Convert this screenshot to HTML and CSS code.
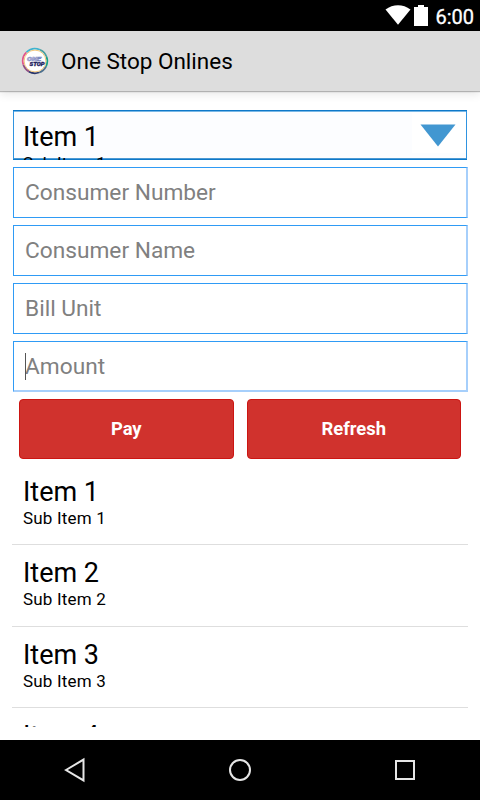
FILE: index.html
```html
<!DOCTYPE html>
<html lang="en">
<head>
<meta charset="UTF-8">
<meta name="viewport" content="width=device-width, initial-scale=1.0">
<title>One Stop Onlines</title>
<link rel="stylesheet" href="styles.css">
</head>
<body>
<div class="status-bar">
  <svg class="wifi" width="26" height="20" viewBox="0 0 26 20"><path d="M0.5 4.6C8-1.2 18-1.2 25.5 4.6L13 19.8z" fill="#fff"/></svg>
  <svg class="battery" width="14" height="21" viewBox="0 0 14 21"><path d="M0 2h4V0h6v2h4v19H0z" fill="#fff"/></svg>
  <span class="clock">6:00</span>
</div>
<header class="app-bar">
  <svg class="logo" width="28" height="28" viewBox="0 0 28 28">
    <circle cx="14" cy="14" r="12.2" fill="#fff"/>
    <g fill="none" stroke-width="1.8">
      <path d="M5.4 5.4A12.2 12.2 0 0 1 19 2.8" stroke="#3fb3cf"/>
      <path d="M19 2.8A12.2 12.2 0 0 1 25.6 10" stroke="#4a9fa0"/>
      <path d="M25.6 10A12.2 12.2 0 0 1 25 19.5" stroke="#16a085"/>
      <path d="M25 19.5A12.2 12.2 0 0 1 18 25.5" stroke="#4d6f8c"/>
      <path d="M18 25.5A12.2 12.2 0 0 1 8 24.6" stroke="#29366b"/>
      <path d="M8 24.6A12.2 12.2 0 0 1 2.3 17.5" stroke="#8d4f83"/>
      <path d="M2.3 17.5A12.2 12.2 0 0 1 5.4 5.4" stroke="#e0568b"/>
    </g>
    <circle cx="14" cy="14" r="10.9" fill="none" stroke="#f2c679" stroke-width="1"/>
    <text x="6" y="13.6" class="logo-one" textLength="14" lengthAdjust="spacingAndGlyphs">ONE</text>
    <text x="8.5" y="18.8" class="logo-stop" textLength="15" lengthAdjust="spacingAndGlyphs">STOP</text>
  </svg>
  <h1>One Stop Onlines</h1>
</header>
<main>
  <form class="bill-form">
    <div class="spinner">
      <div class="spinner-item">
        <div class="item-title">Item 1</div>
        <div class="item-sub">Sub Item 1</div>
      </div>
      <div class="spinner-arrow"><svg width="36" height="23" viewBox="0 0 36 23"><path d="M0.5 0.5h35L18 22.5z" fill="#4297d1"/></svg></div>
    </div>
    <input type="text" placeholder="Consumer Number" aria-label="Consumer Number">
    <input type="text" placeholder="Consumer Name" aria-label="Consumer Name">
    <input type="text" placeholder="Bill Unit" aria-label="Bill Unit">
    <div class="field-focused">
      <input type="text" placeholder="Amount" aria-label="Amount">
      <span class="caret"></span>
    </div>
    <div class="buttons">
      <button type="button">Pay</button>
      <button type="button">Refresh</button>
    </div>
  </form>
  <ul class="item-list">
    <li><div class="item-title">Item 1</div><div class="item-sub">Sub Item 1</div></li>
    <li><div class="item-title">Item 2</div><div class="item-sub">Sub Item 2</div></li>
    <li><div class="item-title">Item 3</div><div class="item-sub">Sub Item 3</div></li>
    <li><div class="item-title">Item 4</div><div class="item-sub">Sub Item 4</div></li>
  </ul>
</main>
<nav class="nav-bar">
  <svg width="32" height="32" viewBox="0 0 32 32"><path d="M7 16L24.5 5.6v20.8z"/></svg>
  <svg width="32" height="32" viewBox="0 0 32 32"><circle cx="16" cy="16" r="10"/></svg>
  <svg width="32" height="32" viewBox="0 0 32 32"><path d="M7 7h18v18H7z"/></svg>
</nav>
</body>
</html>
```

FILE: styles.css
```css
*{box-sizing:border-box;margin:0;padding:0}
body{width:480px;height:800px;display:flex;flex-direction:column;overflow:hidden;font-family:Roboto,sans-serif;color:#000;background:#fff}
svg{display:block;flex:none}

.status-bar{height:31px;flex:none;background:#000;display:flex;justify-content:flex-end;padding:5px 6px 0 0}
.battery{margin-left:3px}
.clock{margin-left:7px;color:#fff;font-size:20px;line-height:24px;font-weight:400;-webkit-text-stroke:0.3px #fff}

.app-bar{height:60px;flex:none;background:#ddd;display:flex;align-items:center;padding-left:21px;box-shadow:0 1px 1px rgba(0,0,0,0.25),0 3px 9px rgba(0,0,0,0.1)}
.app-bar h1{margin-left:12px;font-size:22.5px;font-weight:400;line-height:30px}
.logo text{font-family:Roboto,sans-serif;font-weight:900;font-style:italic}
.logo-one{font-size:5.5px;fill:#e4e7f5;stroke:#7b86bd;stroke-width:0.5px}
.logo-stop{font-size:4.8px;fill:#1d2260;stroke:#1d2260;stroke-width:0.3px}

main{flex:1;min-height:0;padding:19px 12px 13px;display:flex;flex-direction:column}
.bill-form{flex:none;display:flex;flex-direction:column;gap:7px}
/* frame is an inset shadow so the clipped sub item runs over it */
.spinner{height:50px;width:454px;margin-left:1px;display:flex;justify-content:space-between;overflow:hidden;background:#fcfdff;box-shadow:inset 0 1px #0e78c8,inset 0 -1px #0e78c8,inset 1px 0 #2f93e0,inset -1px 0 #2f93e0,inset 0 2px #7ab8e6,inset 0 -2px #4c9ad4}
.spinner-item{padding:11px 0 0 10px}
.spinner-arrow{width:54px;height:40px;margin:3px 1px 0 0;padding:11px 0 0 8px;background:#fff}
input{display:block;width:455px;height:51px;margin-left:1px;padding:0 11px;border:1px solid #2f9bf5;border-right:2px solid #a6cffb;background:#fff;font:22.7px Roboto,sans-serif;color:#000;outline:none;border-radius:0}
input::placeholder{color:#808080;opacity:1}
.field-focused{position:relative}
.field-focused input{border-bottom:2px solid #a6cffb}
.caret{position:absolute;left:13px;top:12px;width:1px;height:27px;background:#555}

.buttons{display:flex;gap:13px;padding:0 7px}
button{flex:1;height:60px;padding-bottom:2px;border:1px solid #cc1512;border-radius:4px;background:#d0322d;color:#fff;font:bold 18.4px Roboto,sans-serif}

.item-list{flex:1;min-height:0;margin-top:5px;overflow:hidden;list-style:none}
.item-list li{height:81.3px;padding:12px 11px 0;border-bottom:1px solid #dedede}
.item-title{font-size:27px;line-height:32px}
.item-sub{font-size:17px;line-height:20px;letter-spacing:0.2px}

.nav-bar{height:60px;flex:none;background:#000;display:flex;justify-content:space-between;align-items:center;padding:0 59px}
.nav-bar svg{fill:none;stroke:#e6e6e6;stroke-width:2}
```
